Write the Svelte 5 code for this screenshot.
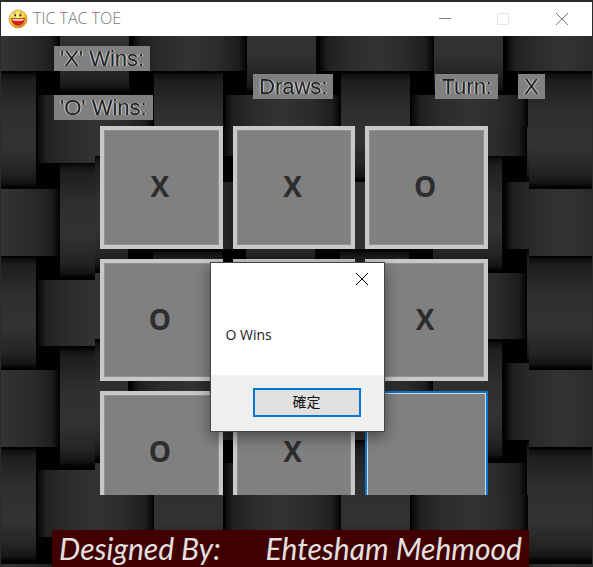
<script>
  const marks = ['X', 'X', 'O', 'O', 'O', 'X', 'O', 'X', ''];
  const period = 187;
  const columns = [-1, 0, 1, 2, 3];
  const rising = [[-23, 115], [164, 113], [349, 117], [540, 114]];
  const falling = [[73, 114], [258, 110], [449, 112]];
  const over = [[95, 68], [280, 66], [470, 67]];
  const under = [[4, 67], [189, 67], [370, 77], [564, 68]];
</script>

{#snippet strips()}
  <rect width="800" height="700" fill="#010101" />
  {#each columns as c}
    {#each rising as [y, h]}<rect x={59 + c * period} {y} width="69" height={h} fill="url(#down)" />{/each}
    {#each falling as [y, h]}<rect x={153 + c * period} {y} width="69" height={h} fill="url(#down)" />{/each}
    {#each over as [y, h]}<rect x={37 + c * period} {y} width="115" height={h} fill="url(#across)" />{/each}
    {#each under as [y, h]}<rect x={132 + c * period} {y} width="113" height={h} fill="url(#across)" />{/each}
  {/each}
{/snippet}

<div class="window">
  <header>
    <svg class="smile" viewBox="0 0 20 20" aria-hidden="true">
      <defs>
        <radialGradient id="face" cx="40%" cy="30%" r="70%">
          <stop offset="0" stop-color="#fff58a" />
          <stop offset=".65" stop-color="#fbcf35" />
          <stop offset="1" stop-color="#dc7d18" />
        </radialGradient>
      </defs>
      <circle cx="10" cy="10" r="9" fill="url(#face)" stroke="#d08a3a" stroke-width=".7" />
      <path d="M5.5 4.2q1.2-1 2.2 0M11.5 4.2q1.2-1 2.2 0" fill="none" stroke="#a86a10" stroke-width=".7" />
      <ellipse cx="7.2" cy="6.3" rx=".9" ry="1.2" fill="#27304c" />
      <ellipse cx="12.4" cy="6.3" rx=".9" ry="1.2" fill="#27304c" />
      <path d="M3.6 9.2Q10 10.4 16.4 9.2Q16 16 10 16.3Q4 16 3.6 9.2Z" fill="#e51b0c" stroke="#8a2108" stroke-width=".7" />
      <path d="M4.3 9.8Q10 10.8 15.7 9.8L15.4 11.2Q10 12.2 4.6 11.2Z" fill="#fff" />
    </svg>
    <h1>TIC TAC TOE</h1>
    <div class="controls">
      <button aria-label="Minimize"><svg viewBox="0 0 12 12"><path d="M0 5.5H12" stroke="#858585" /></svg></button>
      <button aria-label="Maximize" disabled><svg viewBox="0 0 12 12"><path d="M.5 .5H11.5V11.5H.5Z" stroke="#e6e6e6" /></svg></button>
      <button aria-label="Close"><svg viewBox="0 0 12 12"><path d="M0 0L12 12M12 0L0 12" stroke="#777" /></svg></button>
    </div>
  </header>

  <main>
    <svg class="weave" aria-hidden="true">
      <defs>
        <linearGradient id="down" x2="0" y2="1">
          <stop offset="0" stop-color="#0c0c0c" />
          <stop offset=".07" stop-color="#1e1e1e" />
          <stop offset=".35" stop-color="#2f2f2f" />
          <stop offset=".65" stop-color="#323232" />
          <stop offset=".86" stop-color="#242424" />
          <stop offset=".96" stop-color="#151515" />
          <stop offset="1" stop-color="#030303" />
        </linearGradient>
        <linearGradient id="across">
          <stop offset="0" stop-color="#080808" />
          <stop offset=".07" stop-color="#202020" />
          <stop offset=".25" stop-color="#2b2b2b" />
          <stop offset=".5" stop-color="#333" />
          <stop offset=".75" stop-color="#2b2b2b" />
          <stop offset=".93" stop-color="#1e1e1e" />
          <stop offset="1" stop-color="#050505" />
        </linearGradient>
      </defs>
      <svg y="-36" overflow="visible">{@render strips()}</svg>
      <svg x="94" y="91" width="434" height="368" viewBox="95 134 434 368">{@render strips()}</svg>
    </svg>

    <section class="score">
      <div class="wins"><span>'X' Wins:</span><span>'O' Wins:</span></div>
      <div class="status">
        <span class="draws">Draws:</span>
        <span class="turn">Turn:</span>
        <span>X</span>
      </div>
    </section>

    <section class="board">
      {#each marks as mark, i}
        <button class:focused={i === 8} aria-label={`Square ${i + 1} ${mark}`}>{mark}</button>
      {/each}
    </section>

    <footer><span>Designed By:</span><span>Ehtesham Mehmood</span></footer>
  </main>

  <div class="dialog" role="dialog" aria-modal="true" aria-labelledby="result">
    <button class="close" aria-label="Close"><svg viewBox="0 0 12 12"><path d="M0 0L12 12M12 0L0 12" stroke="#000" /></svg></button>
    <p id="result">O Wins</p>
    <div class="actions"><button class="ok">確定</button></div>
  </div>
</div>

<style>
  :global(body) { background: #1f1c1e; }
  * { box-sizing: border-box; }
  button { margin: 0; padding: 0; border: 0; font-family: inherit; }
  .window {
    position: relative;
    display: flex;
    flex-direction: column;
    height: 100vh;
    border: solid #2b2b2b;
    border-width: 2px 1px 0;
    overflow: hidden;
    font-family: "Open Sans", "Noto Sans", "Noto Sans CJK TC", sans-serif;
  }
  header {
    display: flex;
    align-items: center;
    flex: none;
    height: 34px;
    padding-left: 7px;
    background: #fff;
  }
  .smile { width: 20px; height: 20px; }
  h1 { margin: 0 0 2px 5px; font-size: 16px; line-height: 20px; font-weight: 300; color: #777; }
  .controls { display: flex; height: 100%; margin-left: auto; }
  .controls button { display: grid; place-items: center; width: 58px; background: none; }
  .controls button:last-child { width: 60px; }
  .controls svg, .close svg { width: 12px; height: 12px; fill: none; }
  main {
    position: relative;
    flex: 1;
    min-height: 0;
    display: flex;
    flex-direction: column;
    background: #000;
  }
  .weave { position: absolute; inset: 0; width: 100%; height: 100%; }
  .score {
    position: relative;
    display: flex;
    align-items: flex-start;
    margin: 10px 0 6px 53px;
  }
  .wins { display: flex; flex-direction: column; align-items: flex-start; gap: 24px; width: 199px; }
  .status { display: flex; padding-top: 28px; }
  .score span {
    padding: 0 6px;
    background: #808080;
    color: #222;
    font-family: "Liberation Sans", sans-serif;
    font-size: 22px;
    line-height: 25px;
    text-shadow: -1px 0 #b7cee2, 1px 0 #dfccb8;
  }
  .draws { margin-right: 102px; }
  .turn { margin-right: 20px; }
  .board {
    position: relative;
    flex: 1;
    min-height: 0;
    display: grid;
    grid-template-columns: repeat(3, 1fr);
    align-content: start;
    gap: 10px;
    width: 388px;
    margin-left: 99px;
    overflow: hidden;
  }
  .board button {
    aspect-ratio: 1;
    padding: 0 3px 3px 0;
    border: 4px solid #c8c8c8;
    box-shadow: inset 0 0 0 1px #909090;
    background: #808080;
    color: #2d2d2d;
    font-size: 28px;
    font-weight: 700;
  }
  .board .focused { border: 2px solid #0078d7; box-shadow: inset 0 0 0 1px #d8d8d8; }
  footer {
    position: relative;
    display: flex;
    justify-content: space-between;
    width: 477px;
    margin: 35px 0 0 51px;
    padding: 0 7px;
    background: #400000;
    color: #e4e0e0;
    font-family: "Segoe Script", "Lato", sans-serif;
    font-size: 30px;
    font-style: italic;
    line-height: 37px;
  }
  .dialog {
    position: absolute;
    top: 260px;
    left: calc(50% - 87px);
    display: flex;
    flex-direction: column;
    width: 175px;
    border: 1px solid #444;
    background: #fff;
    box-shadow: 0 5px 14px rgb(0 0 0 / 45%);
  }
  .close { display: grid; place-items: center; align-self: flex-end; width: 44px; height: 32px; background: none; }
  p { margin: 0; padding: 30px 15px; font-size: 14px; line-height: 20px; color: #222; }
  .actions { display: flex; justify-content: flex-end; padding: 13px 23px 14px; background: #f0f0f0; }
  .ok {
    width: 108px;
    height: 29px;
    padding-bottom: 3px;
    border: 2px solid #0078d7;
    background: #e1e1e1;
    color: #111;
    font-size: 14px;
  }
</style>
